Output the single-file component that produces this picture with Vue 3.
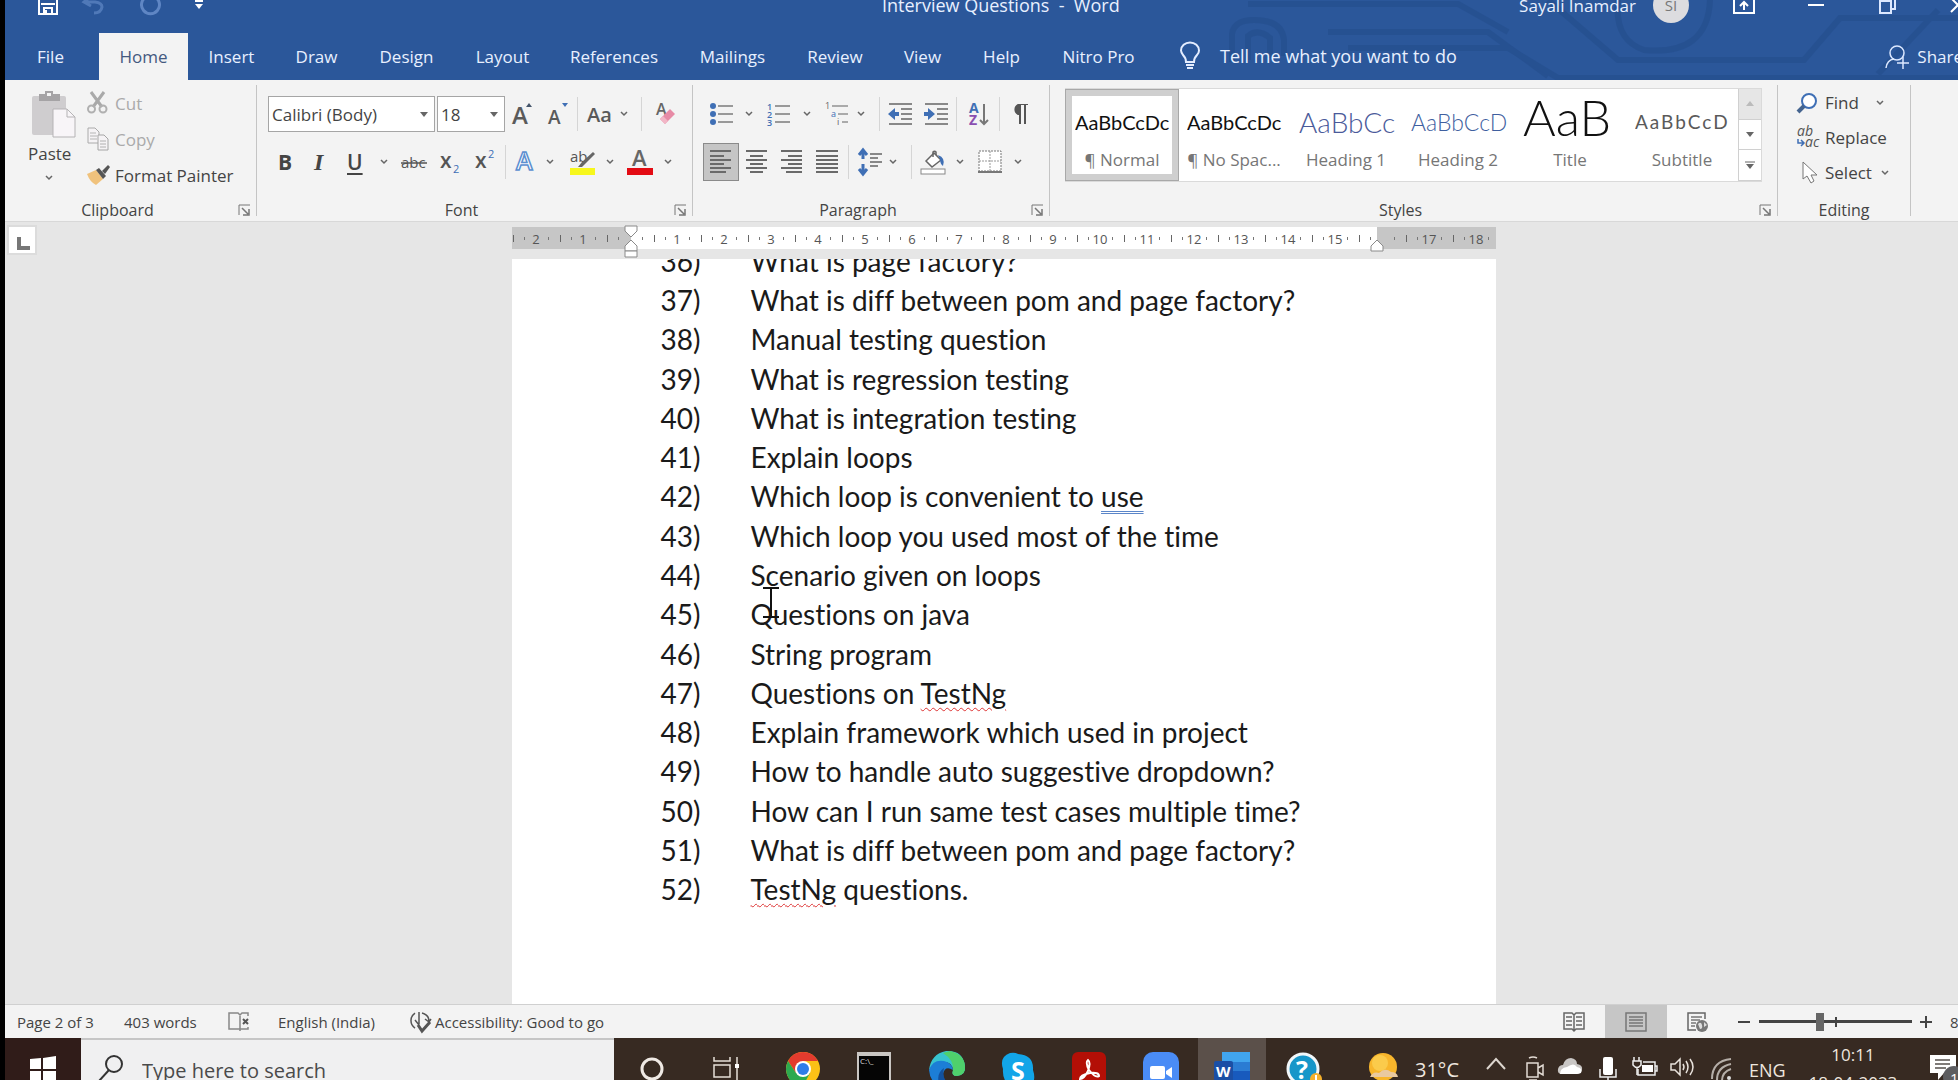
<script setup>
import { h, ref } from 'vue'

const G = '#6a6a6a'
const B = '#3f6fb5'
const lines = (rows, color = G) =>
  rows.map(([x1, x2, y]) => `<path d="M${x1} ${y}H${x2}" stroke="${color}" stroke-width="2"/>`).join('')

// name: [width, height, svg body]
const icons = {
  save: [20, 20, '<path d="M1 0H19V19H1Z" fill="none" stroke="#fff" stroke-width="2"/><path d="M3 9H17" stroke="#fff" stroke-width="2"/><path d="M6 19V13H14V19" fill="none" stroke="#fff" stroke-width="2"/><path d="M8 15V19" stroke="#fff" stroke-width="2"/>'],
  undo: [22, 20, '<path d="M8 2L2 7L9 11M2 7H13Q20 8 20 12Q19 18 12 18" fill="none" stroke="#5079b8" stroke-width="3"/>'],
  redo: [22, 22, '<path d="M15 3A9 9 0 1 1 6 3" fill="none" stroke="#5f86c4" stroke-width="3"/><path d="M13 1H19V7" fill="none" stroke="#5f86c4" stroke-width="2"/>'],
  custom: [8, 10, '<path d="M0 1H8" stroke="#fff" stroke-width="2"/><path d="M0 4H8L4 9Z" fill="#fff"/>'],
  chev: [8, 6, '<path d="M1 1L4 4L7 1" fill="none" stroke="#666" stroke-width="1.500"/>'],
  tri: [8, 5, '<path d="M0 0H8L4 5Z" fill="#666"/>'],
  triUp: [8, 5, '<path d="M0 5H8L4 0Z" fill="#bbb"/>'],
  more: [10, 8, '<path d="M0 1H10" stroke="#666" stroke-width="1"/><path d="M1 3H9L5 8Z" fill="#666"/>'],
  display: [22, 20, '<path d="M1 1H21V18H1ZM1 4H21" fill="none" stroke="#fff" stroke-width="2"/><path d="M11 15V7M7 11L11 7L15 11" fill="none" stroke="#fff" stroke-width="2"/>'],
  min: [16, 2, '<path d="M0 1H16" stroke="#fff" stroke-width="2"/>'],
  restore: [17, 18, '<path d="M1 5H12V17H1Z M5 5V1H16V13H13" fill="none" stroke="#dce8ff" stroke-width="2"/>'],
  close: [16, 16, '<path d="M1 1L15 15M15 1L1 15" stroke="#fff" stroke-width="2"/>'],
  bulb: [20, 28, '<path d="M6 20Q6 16 3 13Q1 10 1 8.500A9 8 0 0 1 19 8.500Q19 11 17 13Q14 16 14 20Z" fill="none" stroke="#e4edff" stroke-width="2"/><path d="M6 23H14M7 26H13" stroke="#e4edff" stroke-width="2"/>'],
  share: [24, 24, '<circle cx="12" cy="8" r="7" fill="none" stroke="#dce8ff" stroke-width="1.500"/><path d="M1 23Q2 15 9 14M12 18H24M18 12V24" fill="none" stroke="#dce8ff" stroke-width="1.500"/>'],
  paste: [44, 48, '<rect x="0" y="5" width="34" height="39" rx="2" fill="#cfcdcf"/><path d="M7 3H13V0H21V3H28V10H7Z" fill="#a5a3a5"/><rect x="15" y="2" width="4" height="3" fill="#f3f3f3"/><path d="M21 18H35L43 26V46H21Z" fill="#f8f5f8" stroke="#b5b3b5"/><path d="M35 18V26H43" fill="none" stroke="#b5b3b5"/>'],
  cut: [21, 22, '<path d="M4 0L15 15M17 0L6 15" stroke="#a9a9a9" stroke-width="3"/><circle cx="4.500" cy="17" r="3.500" fill="none" stroke="#b0b0b0" stroke-width="2"/><circle cx="16" cy="17" r="3.500" fill="none" stroke="#b0b0b0" stroke-width="2"/>'],
  copy: [22, 24, '<path d="M1 1H8L12 5V16H1Z" fill="#f5f3f5" stroke="#aaa"/><path d="M3 6H9M3 9H10M3 12H10" stroke="#b5b5b5"/><path d="M11 8H17L21 12V23H11Z" fill="#f5f3f5" stroke="#a5a5a5"/><path d="M13 14H19M13 17H19M13 20H19" stroke="#b0b0b0"/>'],
  painter: [23, 21, '<path d="M0 9L9 5L16 14L9 20Q3 17 0 9Z" fill="#f0c27c"/><path d="M9 5L12 3L19 11L16 14Z" fill="#555"/><path d="M15 6L21 0L23 2L18 9Z" fill="#555"/>'],
  launch: [12, 12, '<path d="M1 11V1H12" fill="none" stroke="#777"/><path d="M4 4L10 10M11 5V11H5" fill="none" stroke="#777" stroke-width="1.500"/>'],
  grow: [22, 24, `<text x="0" y="22" font-size="24" font-weight="600" fill="#5a5a5a">A</text><path d="M14 5L17 1L20 5Z" fill="#44546a"/>`],
  shrink: [22, 24, `<text x="0" y="22" font-size="19" font-weight="600" fill="#5a5a5a">A</text><path d="M14 1H20L17 5Z" fill="${B}"/>`],
  clear: [22, 24, '<text x="1" y="13" font-size="16" font-weight="600" fill="#666">A</text><path d="M5 17L15 7L20 12L10 22Z" fill="#e78ba6"/><path d="M5 17L8 14L13 19L10 22Z" fill="#f2b6c6"/>'],
  abc: [26, 20, '<text x="0" y="16" font-size="15" fill="#555">abc</text><path d="M0 11H26" stroke="#555" stroke-width="1.500"/>'],
  sub: [22, 24, `<text x="0" y="18" font-size="21" font-weight="600" fill="#555">x</text><text x="13" y="23" font-size="11" fill="${B}">2</text>`],
  sup: [22, 24, `<text x="0" y="18" font-size="21" font-weight="600" fill="#555">x</text><text x="13" y="8" font-size="11" fill="${B}">2</text>`],
  effect: [22, 24, `<text x="1" y="20" font-size="25" font-weight="600" fill="#fff" stroke="#5b8fd0" stroke-width="1.500">A</text>`],
  hilite: [26, 26, '<text x="0" y="13" font-size="15" fill="#555">ab</text><path d="M23 3L12 13L8 18H12L25 5Z" fill="#666"/><rect x="0" y="19" width="25" height="7" fill="#f7f71c"/>'],
  color: [26, 26, '<text x="5" y="17" font-size="22" font-weight="600" fill="#666">A</text><rect x="0" y="19" width="26" height="7" fill="#e30b13"/>'],
  bullets: [24, 22, `<circle cx="3" cy="3" r="3" fill="${B}"/><circle cx="3" cy="11" r="3" fill="${B}"/><circle cx="3" cy="19" r="3" fill="${B}"/>` + lines([[8, 23, 3], [8, 23, 11], [8, 23, 19]], '#999')],
  numbers: [24, 24, `<g font-size="9" font-weight="600" fill="${B}"><text x="0" y="8">1</text><text x="0" y="16">2</text><text x="0" y="24">3</text></g>` + lines([[8, 23, 4], [8, 23, 12], [8, 23, 20]], '#999')],
  multi: [24, 24, `<g font-size="9" fill="#666"><text x="0" y="7">1</text><text x="6" y="15" fill="${B}">a</text><text x="12" y="23">i</text></g>` + lines([[7, 23, 4], [13, 23, 12], [17, 23, 20]], '#aaa')],
  outdent: [24, 24, lines([[1, 24, 2], [13, 24, 7], [13, 24, 12], [13, 24, 17], [1, 24, 22]], '#888') + `<path d="M7 6V10H11V14H7V18L0 12Z" fill="${B}"/>`],
  indent: [24, 24, lines([[1, 24, 2], [13, 24, 7], [13, 24, 12], [13, 24, 17], [1, 24, 22]], '#888') + `<path d="M4 6V10H0V14H4V18L11 12Z" fill="${B}"/>`],
  sort: [20, 24, `<text x="0" y="11" font-size="14" font-weight="700" fill="${B}">A</text><text x="0" y="23" font-size="14" font-weight="700" fill="#8a4fb0">Z</text><path d="M15 2V22M11 18L15 22L19 18" fill="none" stroke="#777" stroke-width="2"/>`],
  pilcrow: [18, 22, '<path d="M17 1H7A6 6 0 0 0 7 12H8V21H10V2H13V21H15V2H17Z" fill="#555"/>'],
  left: [22, 24, lines([[0, 21, 1], [0, 14, 6], [0, 21, 10], [0, 14, 14], [0, 21, 18], [0, 16, 22]])],
  center: [22, 24, lines([[0, 21, 1], [4, 17, 6], [0, 21, 10], [4, 17, 14], [0, 21, 18], [4, 17, 22]])],
  right: [22, 24, lines([[0, 21, 1], [7, 21, 6], [0, 21, 10], [7, 21, 14], [0, 21, 18], [5, 21, 22]])],
  justify: [22, 24, lines([[0, 22, 1], [0, 22, 6], [0, 22, 10], [0, 22, 14], [0, 22, 18], [0, 22, 22]])],
  spacing: [24, 26, `<path d="M5 2V10M1 6L5 1L9 6M5 15V24M1 20L5 25L9 20" fill="none" stroke="${B}" stroke-width="3"/>` + lines([[12, 24, 5], [12, 20, 9], [12, 24, 13], [12, 20, 17]], '#888')],
  bucket: [26, 26, `<path d="M6 12L14 4L21 11L12 18Z" fill="#fff" stroke="#666" stroke-width="1.500"/><path d="M13 8V3A2 2 0 0 1 16 3V6" fill="none" stroke="#666" stroke-width="1.500"/><path d="M18 6Q26 9 23 17Q20 15 20 10Z" fill="${B}"/><rect x="1" y="20" width="24" height="5" fill="#fff" stroke="#888"/>`],
  borders: [24, 24, '<rect x="1" y="1" width="22" height="20" fill="#fff" stroke="#777" stroke-dasharray="2 1"/><path d="M12 1V21M1 11H23" stroke="#999" stroke-dasharray="2 1"/><path d="M0 22H24" stroke="#777" stroke-width="2"/>'],
  find: [20, 20, `<circle cx="12" cy="8" r="7" fill="#fff" stroke="${B}" stroke-width="2"/><path d="M7 13L1 19" stroke="#44648f" stroke-width="4"/>`],
  replace: [24, 24, `<text x="0" y="10" font-size="14" fill="#555">ab</text><text x="8" y="21" font-size="14" fill="#555">ac</text><path d="M1 13V17H6M4 14L7 17L4 20" fill="none" stroke="${B}" stroke-width="1.500"/>`],
  select: [16, 24, '<path d="M1 1V18L5 15L9 22L12 20L9 14H15Z" fill="#fff" stroke="#777"/>'],
  proof: [24, 22, '<path d="M12 3V20M12 18H1V2H10L12 4L14 2H20V5M20 16V18H12" fill="none" stroke="#888" stroke-width="1.500"/><path d="M15 8L20 13M20 8L15 13" stroke="#555" stroke-width="2"/>'],
  access: [22, 22, '<path d="M6 2A9 9 0 0 0 6 17M13 2Q20 4 20 10M10 1V13M6 9L10 14M16 8L20 11L22 8" fill="none" stroke="#555" stroke-width="1.500"/><path d="M9 14L13 20L21 11" fill="none" stroke="#555" stroke-width="3"/>'],
  read: [22, 20, '<path d="M11 3V19M1 1H9L11 3L13 1H21V17H13L11 19L9 17H1Z" fill="none" stroke="#666" stroke-width="1.500"/><path d="M3 5H9M3 9H9M3 13H9M13 5H19M13 9H19M13 13H19" stroke="#666" stroke-width="1.500"/>'],
  print: [22, 20, '<path d="M1 1H21V19H1Z" fill="none" stroke="#777" stroke-width="1.500"/><path d="M4 5H18M4 8H18M4 11H18M4 14H18" stroke="#777" stroke-width="1.500"/>'],
  web: [22, 20, '<path d="M9 18H1V1H18V7" fill="none" stroke="#666" stroke-width="1.500"/><path d="M4 5H15M4 8H13M4 11H9M4 14H8" stroke="#777" stroke-width="1.500"/><circle cx="15" cy="14" r="6" fill="#777"/><path d="M11 12Q14 9 15 13T13 17ZM17 10L20 13L17 15Z" fill="#ddd"/>'],
  win: [26, 26, '<path d="M0 3L11 2V13H0ZM13 2L26 0V13H13ZM0 15H11V25L0 24ZM13 15H26V28L13 26Z" fill="#fff"/>'],
  glass: [26, 26, '<circle cx="16" cy="9" r="8" fill="none" stroke="#333" stroke-width="2"/><path d="M11 15L1 26" stroke="#333" stroke-width="2"/>'],
  cortana: [24, 26, '<circle cx="12" cy="12" r="10" fill="none" stroke="#efe9e4" stroke-width="3"/>'],
  task: [27, 26, '<path d="M1 0V4H17V0M1 8H17V20H1ZM1 28V24H17V28M24 0V28" fill="none" stroke="#e6dfd8" stroke-width="1.500"/><rect x="22" y="7" width="4" height="4" fill="#fff"/>'],
  chrome: [34, 34, '<circle cx="17" cy="17" r="17" fill="#fbc116"/><path d="M2 9A17 17 0 0 1 32 9H17L10 21Z" fill="#e33b2e"/><path d="M2 9A17 17 0 0 0 17 34L24 21H10Z" fill="#2da94f"/><circle cx="17" cy="17" r="8" fill="#fff"/><circle cx="17" cy="17" r="6" fill="#2f7de9"/>'],
  cmd: [34, 32, '<rect width="34" height="32" fill="#c9c6c3"/><rect x="2" y="4" width="30" height="28" fill="#050505"/><text x="3" y="12" font-size="8" fill="#ddd">C:\\_</text>'],
  edge: [38, 36, '<path d="M1 20Q3 4 18 1Q35 0 37 16Q38 25 29 26Q23 26 25 20Q24 12 16 12Q5 13 1 20Z" fill="#37c3cf"/><path d="M22 1Q36 4 37 16Q38 25 29 26Q23 26 25 20Q26 10 15 3Z" fill="#4fd06c"/><path d="M1 20Q5 9 16 11Q24 13 25 20Q17 15 15 24Q15 34 26 36Q3 40 1 20Z" fill="#1c7ed6"/><path d="M16 18Q13 30 24 36H12Q7 24 16 18Z" fill="#12519e"/>'],
  skype: [34, 34, '<path d="M9 1Q14 0 17 2Q33 3 32 18Q35 27 31 32L26 36H10Q1 28 2 17Q-2 5 9 1Z" fill="#12a5e8"/><text x="10" y="28" font-size="25" font-weight="700" fill="#fff">S</text>'],
  pdf: [34, 34, '<rect width="34" height="40" rx="6" fill="#b30f06"/><path d="M16 8Q19 10 16 19Q12 27 8 27Q8 23 18 21Q27 20 27 24Q23 26 17 18Q13 10 16 8Z" fill="none" stroke="#fff" stroke-width="2"/>'],
  zoom: [36, 34, '<rect width="36" height="40" rx="10" fill="#4a8cf6"/><rect x="7" y="14" width="15" height="13" rx="2" fill="#fff"/><path d="M23 19L29 15V26L23 22Z" fill="#fff"/>'],
  word: [36, 34, '<rect x="8" y="0" width="28" height="34" rx="2" fill="#2b7cd3"/><rect x="8" y="0" width="28" height="10" fill="#41a5ee"/><rect x="8" y="19" width="28" height="16" fill="#185abd"/><rect x="0" y="9" width="19" height="20" rx="2" fill="#1b4fa5"/><text x="2" y="25" font-size="15" font-weight="700" fill="#fff">W</text>'],
  help: [36, 34, '<circle cx="17" cy="17" r="15" fill="#1796c9" stroke="#f2f7fa" stroke-width="3"/><text x="10" y="27" font-size="25" font-weight="700" fill="#fff">?</text><circle cx="30" cy="27" r="6" fill="#f4b02c"/><path d="M30 23V28" stroke="#fff" stroke-width="2"/>'],
  sun: [32, 30, '<circle cx="16" cy="14" r="14" fill="#f8b62c"/><circle cx="13" cy="10" r="8" fill="#fbcb4b"/><path d="M3 24Q6 18 12 20Q18 14 24 19Q30 19 31 24Z" fill="#e9c9a0"/>'],
  up: [20, 14, '<path d="M1 12L10 2L19 12" fill="none" stroke="#ddd6cf" stroke-width="2"/>'],
  meet: [20, 24, '<path d="M2 6H13V20H2ZM13 11L18 8V18L13 15M4 1Q8 -1 12 1M4 23H12" fill="none" stroke="#e3dcd5" stroke-width="1.500"/>'],
  cloud: [26, 18, '<path d="M5 17Q0 17 1 12Q2 8 6 8Q8 1 14 1Q20 2 20 7Q26 8 25 13Q24 17 20 17Z" fill="#c9c6c4"/><path d="M3 17Q3 11 10 10Q17 5 20 10Q26 11 24 16L20 17Z" fill="#fff"/>'],
  mic: [18, 24, '<rect x="4" y="0" width="10" height="18" rx="2" fill="#fff"/><path d="M1 12V20H17V12M9 20V26" fill="none" stroke="#eee" stroke-width="1.500"/>'],
  battery: [26, 20, '<path d="M11 5H23V18H6V12M23 9H25V14H23" fill="none" stroke="#eee" stroke-width="1.500"/><rect x="10" y="8" width="11" height="7" fill="#fff"/><path d="M2 0V4M7 0V4M1 4H9V8Q5 13 1 8ZM5 11V18" fill="none" stroke="#eee" stroke-width="1.500"/>'],
  sound: [26, 20, '<path d="M1 7H5L10 2V18L5 13H1ZM13 7Q15 10 13 13M16 4Q20 10 16 16M20 2Q26 10 20 18" fill="none" stroke="#e8e2dc" stroke-width="1.500"/>'],
  wifi: [22, 24, '<path d="M1 22Q1 4 20 2M6 23Q6 10 20 7M11 24Q11 15 20 12" fill="none" stroke="#b5aea8" stroke-width="2"/><circle cx="18" cy="21" r="2" fill="#ddd"/>'],
  notes: [28, 30, '<path d="M0 0H26V18H14L8 25V18H0Z" fill="#fff"/><path d="M5 5H20M5 9H20M5 13H16" stroke="#55504c" stroke-width="1.500"/><circle cx="24" cy="22" r="11" fill="#5d5d60"/><text x="20" y="29" font-size="15" fill="#fff">1</text>'],
  ibeam: [18, 32, '<path d="M1 1H17M1 30H17M9 1V30" fill="none" stroke="#111" stroke-width="2"/>']
}
const Icon = ({ n }) => {
  const [w, hgt, body] = icons[n]
  return h('svg', { width: w, height: hgt, viewBox: `0 0 ${w} ${hgt}`, 'aria-hidden': 'true', innerHTML: body })
}
Icon.props = ['n']

const tabs = [
  ['File', 94], ['Home', 89], ['Insert', 87], ['Draw', 83], ['Design', 97], ['Layout', 95], ['References', 128],
  ['Mailings', 109], ['Review', 96], ['View', 79], ['Help', 79], ['Nitro Pro', 115]
]

// Toolbar entries: [icon, cell width]; "|" is a divider, "Aa"/"B"/"I"/"U" are lettered tools.
const fontTop = [['grow', 36], ['shrink', 29], ['|', 10], ['Aa', 33], ['chev', 21], ['|', 14], ['clear', 24]]
const fontBottom = [['B', 36], ['I', 33], ['U', 33], ['chev', 21], ['abc', 39], ['sub', 35], ['sup', 30], ['|', 10],
  ['effect', 31], ['chev', 24], ['hilite', 36], ['chev', 21], ['color', 37], ['chev', 12]]
const paraTop = [['bullets', 35], ['chev', 22], ['numbers', 36], ['chev', 22], ['multi', 32], ['chev', 22], ['|', 9],
  ['outdent', 36], ['indent', 32], ['|', 13], ['sort', 30], ['|', 12], ['pilcrow', 24]]
const paraBottom = [['left', 36], ['center', 35], ['right', 35], ['justify', 32], ['|', 10], ['spacing', 31],
  ['chev', 22], ['|', 9], ['bucket', 36], ['chev', 22], ['borders', 36], ['chev', 12]]

const styles = [
  ['AaBbCcDc', '¶ Normal', 'body'], ['AaBbCcDc', '¶ No Spac...', 'body'], ['AaBbCc', 'Heading 1', 'h1s'],
  ['AaBbCcD', 'Heading 2', 'h2s'], ['AaB', 'Title', 'title'], ['AaBbCcD', 'Subtitle', 'subtitle']
]

const questions = [
  'What is page factory?', 'What is diff between pom and page factory?', 'Manual testing question',
  'What is regression testing', 'What is integration testing', 'Explain loops',
  ['Which loop is convenient to ', 'use', 'grammar'], 'Which loop you used most of the time',
  'Scenario given on loops', 'Questions on java', 'String program', ['Questions on ', 'TestNg', 'spell'],
  'Explain framework which used in project', 'How to handle auto suggestive dropdown?',
  'How can I run same test cases multiple time?', 'What is diff between pom and page factory?',
  ['', 'TestNg', 'spell', ' questions.']
].map((q, i) => ({ n: 36 + i, parts: Array.isArray(q) ? q : [q] }))

const cm = 47
const origin = 118
const marks = []
for (let q = -10; q <= 73; q++) {
  const x = origin + Math.round((q * cm) / 4)
  if (q === 0 || q === 64 || x < 0) continue
  const kind = q % 4 === 0 ? 'num' : q % 2 === 0 ? 'bar' : 'dot'
  marks.push({ x, kind, label: Math.abs(q / 4) })
}

const taskApps = [['cortana', 73], ['task', 73], ['chrome', 71], ['cmd', 71], ['edge', 73], ['skype', 71], ['pdf', 71], ['zoom', 55]]
const tray = [['up', 39], ['meet', 32], ['cloud', 42], ['mic', 33], ['battery', 38], ['sound', 41], ['wifi', 38]]
const zoomLevel = ref(39)
</script>

<template>
  <div class="window">
    <header class="head">
      <svg class="circuit" width="740" height="80" viewBox="0 0 740 80" aria-hidden="true">
        <g fill="none" stroke="#234c8a" stroke-width="6" opacity="0.5">
          <path d="M30 4H240L290 32" /><path d="M14 62V34Q16 20 36 20Q64 20 66 40V56" /><path d="M30 60V36Q40 28 52 38V58" />
          <path d="M110 32H270L330 76" /><path d="M130 48H290L340 78H740" />
          <path d="M330 0L400 60H586L622 18H740" /><path d="M400 0Q396 40 426 50Q490 56 492 0" />
          <path d="M660 74L720 10" />
        </g>
      </svg>
      <div class="titlebar">
        <button class="quick save" aria-label="Save"><Icon n="save" /></button>
        <button class="quick undo" aria-label="Undo"><Icon n="undo" /></button>
        <button class="quick redo" aria-label="Repeat"><Icon n="redo" /></button>
        <button class="quick" aria-label="Customize Quick Access Toolbar"><Icon n="custom" /></button>
        <h1>Interview Questions&nbsp; -&nbsp; Word</h1>
        <div class="account">
          <span>Sayali Inamdar</span>
          <span class="avatar">SI</span>
          <button class="win disp" aria-label="Ribbon Display Options"><Icon n="display" /></button>
          <button class="win mini" aria-label="Minimize"><Icon n="min" /></button>
          <button class="win rest" aria-label="Restore"><Icon n="restore" /></button>
          <button class="win" aria-label="Close"><Icon n="close" /></button>
        </div>
      </div>
      <nav class="tabs">
        <button v-for="[t, w] in tabs" :key="t" class="tab" :class="{ on: t === 'Home', file: t === 'File' }" :style="{ width: w + 'px' }">{{ t }}</button>
        <button class="tell"><Icon n="bulb" /><span>Tell me what you want to do</span></button>
        <button class="share"><Icon n="share" /><span>Share</span></button>
      </nav>
    </header>

    <section class="ribbon">
      <div class="group clipboard">
        <div class="clip">
          <button class="paste"><Icon n="paste" /><span>Paste</span><Icon n="chev" /></button>
          <div class="stack">
            <button class="line off" disabled><i><Icon n="cut" /></i>Cut</button>
            <button class="line off" disabled><i><Icon n="copy" /></i>Copy</button>
            <button class="line"><i><Icon n="painter" /></i>Format Painter</button>
          </div>
        </div>
        <footer>Clipboard<button aria-label="Clipboard settings"><Icon n="launch" /></button></footer>
      </div>

      <div class="group font">
        <div class="row">
          <label class="combo name"><select aria-label="Font"><option>Calibri (Body)</option></select><Icon n="tri" /></label>
          <label class="combo size"><select aria-label="Font size"><option>18</option></select><Icon n="tri" /></label>
          <template v-for="([n, w], i) in fontTop" :key="i">
            <span v-if="n === '|'" class="sep" :style="{ width: w + 'px' }"></span>
            <button v-else class="tool" :style="{ width: w + 'px' }" :aria-label="n"><b v-if="n === 'Aa'" class="aa">Aa</b><Icon v-else :n="n" /></button>
          </template>
        </div>
        <div class="row second">
          <template v-for="([n, w], i) in fontBottom" :key="i">
            <span v-if="n === '|'" class="sep" :style="{ width: w + 'px' }"></span>
            <button v-else class="tool" :style="{ width: w + 'px' }" :aria-label="n"><b v-if="n.length === 1" class="letter" :class="n">{{ n }}</b><Icon v-else :n="n" /></button>
          </template>
        </div>
        <footer>Font<button aria-label="Font settings"><Icon n="launch" /></button></footer>
      </div>

      <div class="group para">
        <div class="row">
          <template v-for="([n, w], i) in paraTop" :key="i">
            <span v-if="n === '|'" class="sep" :style="{ width: w + 'px' }"></span>
            <button v-else class="tool" :style="{ width: w + 'px' }" :aria-label="n"><Icon :n="n" /></button>
          </template>
        </div>
        <div class="row second">
          <template v-for="([n, w], i) in paraBottom" :key="i">
            <span v-if="n === '|'" class="sep" :style="{ width: w + 'px' }"></span>
            <button v-else class="tool" :class="{ pressed: n === 'left' }" :style="{ width: w + 'px' }" :aria-label="n"><Icon :n="n" /></button>
          </template>
        </div>
        <footer>Paragraph<button aria-label="Paragraph settings"><Icon n="launch" /></button></footer>
      </div>

      <div class="group styles">
        <div class="gallery">
          <button v-for="([s, l, c], i) in styles" :key="l" class="style" :class="{ picked: i === 0 }">
            <span class="sample" :class="c">{{ s }}</span><span class="caption">{{ l }}</span>
          </button>
          <div class="scroll">
            <button class="dim" aria-label="Previous styles"><Icon n="triUp" /></button>
            <button aria-label="Next styles"><Icon n="tri" /></button>
            <button aria-label="More styles"><Icon n="more" /></button>
          </div>
        </div>
        <footer>Styles<button aria-label="Styles settings"><Icon n="launch" /></button></footer>
      </div>

      <div class="group editing">
        <div class="stack">
          <button class="line"><i><Icon n="find" /></i>Find<Icon class="wide" n="chev" /></button>
          <button class="line"><i><Icon n="replace" /></i>Replace</button>
          <button class="line"><i class="arrow"><Icon n="select" /></i>Select<Icon n="chev" /></button>
        </div>
        <footer>Editing</footer>
      </div>
    </section>

    <main class="workspace">
      <button class="tabstop" aria-label="Left tab"></button>
      <svg class="ruler" width="984" height="32" viewBox="0 0 984 32" role="img" aria-label="Ruler">
        <rect y="1" width="984" height="22" fill="#c6c6c6" /><rect x="119" y="1" width="746" height="22" fill="#fff" />
        <template v-for="m in marks" :key="m.x">
          <text v-if="m.kind === 'num'" :x="m.x" y="18" text-anchor="middle">{{ m.label }}</text>
          <rect v-else-if="m.kind === 'bar'" :x="m.x" y="9" width="1" height="7" fill="#666" />
          <rect v-else :x="m.x" y="11" width="1" height="3" fill="#777" />
        </template>
        <g fill="#fff" stroke="#8a8a8a"><path d="M113 0H125V5L119 11L113 5Z" /><path d="M119 14L125 20V25H113V20Z" /><path d="M113 25H125V31H113Z" /><path d="M865 14L871 20V25H859V20Z" /></g>
      </svg>
      <article class="page">
        <ol>
          <li v-for="q in questions" :key="q.n">
            <span class="num">{{ q.n }})</span>
            <span>{{ q.parts[0] }}<span v-if="q.parts[1]" :class="q.parts[2]">{{ q.parts[1] }}</span>{{ q.parts[3] }}</span>
          </li>
        </ol>
        <Icon class="ibeam" n="ibeam" />
      </article>
    </main>

    <section class="status">
      <span class="pg">Page 2 of 3</span><span class="words">403 words</span>
      <span class="proof"><Icon n="proof" /></span><span class="lang">English (India)</span>
      <span class="acc"><Icon n="access" />Accessibility: Good to go</span>
      <div class="views">
        <button aria-label="Read Mode"><Icon n="read" /></button>
        <button class="on" aria-label="Print Layout"><Icon n="print" /></button>
        <button aria-label="Web Layout"><Icon n="web" /></button>
        <button class="step" aria-label="Zoom out"><svg width="12" height="12"><path d="M0 6H12" stroke="#444" stroke-width="2" /></svg></button>
        <label class="zoomer"><input v-model="zoomLevel" type="range" aria-label="Zoom" /></label>
        <button class="step" aria-label="Zoom in"><svg width="12" height="12"><path d="M0 6H12M6 0V12" stroke="#444" stroke-width="2" /></svg></button>
        <span class="pct">82%</span>
      </div>
    </section>

    <footer class="taskbar">
      <button class="start" aria-label="Start"><Icon n="win" /></button>
      <label class="search"><Icon n="glass" /><input type="text" placeholder="Type here to search" aria-label="Search" /></label>
      <div class="apps">
        <button v-for="[n, w] in taskApps" :key="n" :class="n" :style="{ width: w + 'px' }" :aria-label="n"><Icon :n="n" /></button>
        <button class="active" aria-label="Word"><Icon n="word" /></button>
        <button class="helpapp" aria-label="Help"><Icon n="help" /></button>
      </div>
      <div class="tray">
        <button class="weather"><Icon n="sun" /><span>31°C</span></button>
        <button v-for="[n, w] in tray" :key="n" :style="{ width: w + 'px' }" :aria-label="n"><Icon :n="n" /></button>
        <span class="eng">ENG</span>
        <div class="clock"><span>10:11</span><span>18-04-2023</span></div>
        <button class="notes" aria-label="Notifications"><Icon n="notes" /></button>
      </div>
    </footer>
  </div>
</template>

<style>
body { margin: 0; background: #000; overflow: hidden; }
</style>

<style scoped>
* { box-sizing: border-box; }
.window { height: 100vh; border-left: 5px solid #000; display: flex; flex-direction: column; overflow: hidden; font-family: "Open Sans", "Noto Sans", sans-serif; font-size: 17px; color: #444; background: #e6e6e6; }
button { font: inherit; color: inherit; background: none; border: 0; padding: 0; margin: 0; white-space: nowrap; text-align: left; }
svg { flex: none; display: block; overflow: visible; }

.head { position: relative; flex: none; height: 80px; background: #2b579a; color: #e8f0ff; overflow: hidden; }
.circuit { position: absolute; right: 0; top: 0; }
.titlebar { position: relative; height: 56px; margin-top: -23px; display: flex; align-items: center; padding-left: 33px; }
.quick.save { width: 44px; }
.quick.undo { width: 58px; }
.quick.redo { width: 55px; }
h1 { flex: 1; margin: 0; font-size: 18px; font-weight: 400; padding-left: 679px; white-space: nowrap; }
.account { display: flex; align-items: center; height: 56px; white-space: nowrap; }
.avatar { width: 36px; height: 36px; border-radius: 50%; background: #dcdcdf; color: #777; display: grid; place-items: center; font-size: 15px; margin: 0 44px 0 17px; }
.disp { width: 75px; }
.mini { width: 71px; }
.rest { width: 71px; }
.account .win:last-child { width: 8px; }
.tabs { position: relative; height: 47px; display: flex; }
.tab { flex: none; text-align: center; font-size: 17px; height: 47px; }
.tab.file { padding-right: 3px; }
.tab.on { background: #f3f3f3; color: #44597f; }
.tell { display: flex; align-items: center; margin-left: 24px; gap: 20px; font-size: 18px; height: 46px; }
.share { display: flex; align-items: center; gap: 8px; margin: 0 -5px 0 auto; }

.ribbon { flex: none; display: flex; height: 142px; background: #f3f3f3; border-bottom: 1px solid #d8d8d8; }
.group { --pad: 0px; position: relative; flex: none; display: flex; flex-direction: column; margin: 5px 0; height: 131px; border-right: 1px solid #c4c4c4; padding-left: var(--pad); }
.group footer { display: flex; justify-content: center; align-items: center; margin: auto 0 0 calc(-1 * var(--pad)); height: 12px; padding-right: 26px; font-size: 16px; position: relative; }
.group footer button { position: absolute; right: 6px; top: 0; }
.clipboard { width: 252px; }
.font { width: 436px; --pad: 11px; }
.para { width: 357px; --pad: 17px; }
.styles { width: 728px; --pad: 15px; }
.editing { width: 133px; --pad: 19px; }
.editing footer { padding-right: 0; }
.clip { display: flex; padding-left: 23px; }
.paste { width: 59px; padding-top: 6px; display: flex; flex-direction: column; align-items: flex-start; }
.paste svg:first-child { margin-left: 4px; }
.paste svg:last-child { margin: 10px 0 0 17px; }
.paste span { line-height: 22px; margin-top: 4px; }
.stack { display: flex; flex-direction: column; }
.line { height: 36px; display: flex; align-items: center; gap: 9px; }
.line i { width: 19px; }
.editing .line { height: 35px; }
.off { color: #aaa; }
.line .wide { margin-left: 8px; }
.line .arrow { padding-left: 5px; }
.row { display: flex; align-items: center; height: 36px; margin-top: 11px; }
.row.second { margin-top: 12px; padding-left: 10px; }
.para .row.second { padding-left: 0; }
.tool { flex: none; display: flex; align-items: center; height: 36px; }
.pressed svg { background: #c5c5c5; outline: 6px solid #c5c5c5; box-shadow: 0 0 0 7px #8a8a8a; }
.sep { flex: none; height: 34px; border-left: 1px solid #d5d5d5; }
.combo { position: relative; display: flex; align-items: center; background: #fff; border: 1px solid #a5a5a5; height: 36px; margin-right: 2px; flex: none; }
.combo.name { width: 167px; }
.combo.size { width: 68px; margin-right: 7px; }
.combo select { appearance: none; border: 0; background: none; font: inherit; color: #444; width: 100%; height: 34px; padding: 0 3px; }
.combo svg { position: absolute; right: 6px; }
.aa { font-weight: 600; font-size: 20px; color: #5a5a5a; }
.letter { font-size: 21px; color: #444; }
.letter.I { font-family: "Liberation Serif", serif; font-style: italic; font-size: 24px; }
.letter.U { text-decoration: underline; text-underline-offset: 3px; font-weight: 600; }

.gallery { display: flex; margin-top: 3px; height: 94px; background: #fff; border: 1px solid #dadada; width: 697px; }
.style { width: 112px; flex: none; height: 90px; margin-top: 1px; padding: 0 9px; display: flex; flex-direction: column; }
.style.picked { outline: 6px solid #cfcfcf; outline-offset: -6px; box-shadow: 0 0 0 1px #a8a8a8; }
.sample { height: 50px; margin-top: 9px; overflow: hidden; font-family: Lato, sans-serif; color: #111; font-size: 20px; line-height: 46px; margin-right: -2px; }
.caption { text-align: center; color: #767676; font-size: 17px; line-height: 22px; margin: 0 -8px; }
.sample.h1s { font-size: 28px; font-weight: 300; color: #4a5a9a; }
.sample.h2s { font-size: 23px; font-weight: 300; color: #3f5f9f; }
.sample.title { font-size: 50px; font-weight: 300; line-height: 36px; }
.sample.subtitle { letter-spacing: 2px; color: #5a5a5a; font-size: 19px; }
.scroll { margin-left: auto; width: 23px; display: flex; flex-direction: column; border-left: 1px solid #d0d0d0; }
.scroll button { flex: 1; display: grid; place-items: center; border-bottom: 1px solid #d0d0d0; }
.scroll .dim { background: #e6e6e6; }

.workspace { position: relative; flex: 1; min-height: 0; display: flex; flex-direction: column; align-items: center; padding-left: 44px; overflow: hidden; }
.tabstop { position: absolute; left: 4px; top: 5px; width: 26px; height: 26px; background: #fff; box-shadow: 0 0 0 2px #dcdcdc; }
.tabstop::after { content: ""; position: absolute; left: 8px; top: 10px; width: 9px; height: 9px; border-left: 4px solid #777; border-bottom: 4px solid #777; }
.ruler { margin-top: 4px; position: relative; z-index: 1; font-size: 13px; fill: #555; }
.page { position: relative; width: 984px; flex: 1; background: #fff; overflow: hidden; margin-top: 1px; }
ol { list-style: none; margin: -18px 0 0; padding: 0 0 0 149px; height: 668px; display: grid; grid-auto-rows: 1fr; font-family: Lato, sans-serif; font-size: 28px; line-height: 36px; font-variant-ligatures: none; color: #1a1a1a; }
li { display: flex; align-items: center; white-space: pre; }
.num { width: 90px; }
.grammar { text-decoration: underline double #5b86c9 1px; text-underline-offset: 4px; }
.spell { text-decoration: underline wavy #d33 1px; text-underline-offset: 3px; }
.ibeam { position: absolute; left: 250px; top: 328px; }

.status { flex: none; height: 34px; display: flex; align-items: center; background: #f3f3f3; border-top: 1px solid #d0d0d0; padding-left: 12px; font-size: 15px; white-space: nowrap; }
.pg { width: 107px; }
.words { width: 104px; }
.proof { width: 50px; }
.lang { width: 131px; }
.acc { display: flex; align-items: center; gap: 4px; }
.views { margin-left: auto; display: flex; align-items: center; height: 33px; }
.views button { width: 62px; height: 33px; display: grid; place-items: center; }
.views .on { background: #c6c6c6; }
.views .step { width: 12px; }
.views .step:nth-of-type(4) { margin-left: 9px; }
.zoomer { position: relative; display: flex; margin: 0 8px 0 9px; }
.zoomer::after { content: ""; position: absolute; left: 76px; top: 4px; width: 2px; height: 10px; background: #444; }
.zoomer input { appearance: none; width: 153px; height: 18px; margin: 0; background: linear-gradient(#444, #444) center / 100% 3px no-repeat; }
.zoomer input::-webkit-slider-thumb { appearance: none; width: 8px; height: 18px; background: #666; }
.pct { margin-left: 18px; width: 8px; overflow: hidden; }

.taskbar { flex: none; height: 42px; display: flex; background: #372a22; color: #eee6df; overflow: hidden; white-space: nowrap; }
.start { width: 76px; background: #301c19; padding: 18px 0 0 25px; }
.search { width: 533px; background: #f0f0f1; border-top: 2px solid #c6c6c6; display: flex; padding: 15px 0 0 17px; gap: 18px; }
.search input { border: 0; background: none; font: inherit; font-size: 20px; height: 30px; flex: 1; padding: 0; outline: 0; }
.search input::placeholder { color: #4a4a4a; opacity: 1; }
.apps { display: flex; padding-left: 26px; }
.apps button { padding-top: 14px; }
.apps .cortana, .apps .task { padding-top: 19px; }
.apps .edge { padding-top: 12px; }
.apps .active { width: 68px; background: #5b504a; padding: 14px 0 0 16px; }
.apps .helpapp { padding-left: 20px; width: 60px; }
.tray { margin-left: auto; display: flex; }
.tray button { display: flex; align-items: flex-start; padding-top: 19px; }
.tray .weather { padding-top: 15px; gap: 16px; width: 119px; font-size: 20px; }
.weather span { line-height: 34px; }
.eng { width: 48px; font-size: 18px; line-height: 64px; }
.clock { width: 133px; display: flex; flex-direction: column; align-items: center; font-size: 17px; line-height: 28px; padding-top: 3px; padding-right: 21px; }
.tray .notes { width: 28px; padding-top: 17px; }
</style>
